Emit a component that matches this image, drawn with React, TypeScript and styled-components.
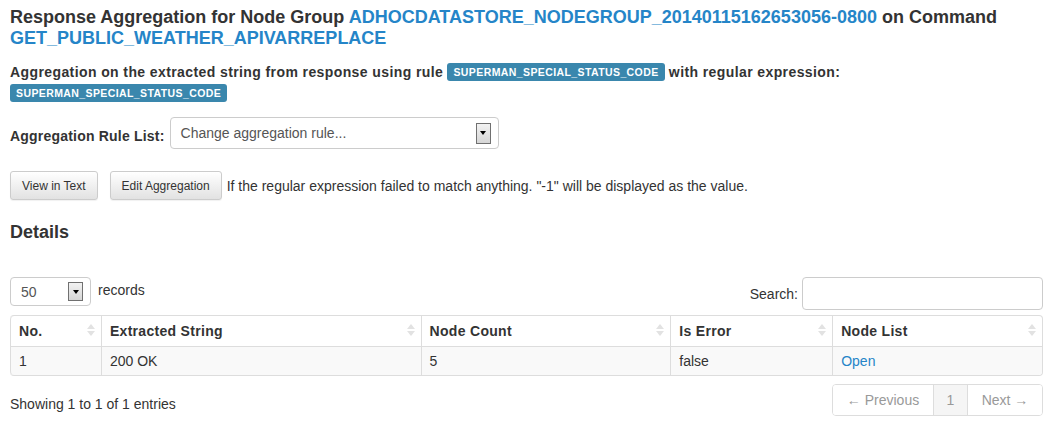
import React from "react";
import styled, { createGlobalStyle } from "styled-components";

const Global = createGlobalStyle`
  html, body { margin: 0; padding: 0; background: #fff; }
  body {
    font-family: "Liberation Sans", Arial, sans-serif;
    font-size: 14px;
    line-height: 20px;
    color: #333;
  }
`;

const Page = styled.div`
  padding: 7px 20px 0 10px;
  display: flex;
  flex-direction: column;
`;

const Title = styled.h4`
  margin: 0;
  font-size: 18px;
  line-height: 21px;
  font-weight: bold;
  color: #333;
`;

const Link = styled.a`
  color: #2585c8;
  text-decoration: none;
`;

const Para = styled.p`
  margin: 13px 0 0;
  font-weight: bold;
  line-height: 21px;
  letter-spacing: 0.4px;
`;

const Label = styled.span`
  display: inline-block;
  background: #3a87ad;
  color: #fff;
  font-size: 10.5px;
  line-height: 14px;
  font-weight: bold;
  letter-spacing: 0.4px;
  padding: 2px 6px 2px;
  border-radius: 3px;
  vertical-align: 1px;
`;

const RuleRow = styled.div`
  display: flex;
  align-items: center;
  gap: 5px;
  margin-top: 13px;
`;

const Bold = styled.span`
  font-weight: bold;
  letter-spacing: 0.2px;
  padding-top: 6px;
`;

const SelectBox = styled.div<{ $w: number; $h: number }>`
  width: ${(p) => p.$w}px;
  height: ${(p) => p.$h}px;
  box-sizing: border-box;
  border: 1px solid #ccc;
  border-radius: 4px;
  display: flex;
  align-items: center;
  padding: 0 7px 0 10px;
  color: #555;
  background: #fff;
`;

const SelectText = styled.span`
  flex: 1;
`;

const Arrow = styled.span<{ $h: number }>`
  width: 15px;
  height: ${(p) => p.$h}px;
  box-sizing: border-box;
  border: 1px solid #707070;
  background: linear-gradient(#f2f2f2, #d6d6d6);
  display: flex;
  align-items: center;
  justify-content: center;
  &::after {
    content: "";
    border-left: 3.5px solid transparent;
    border-right: 3.5px solid transparent;
    border-top: 4px solid #000;
  }
`;

const ButtonRow = styled.div`
  display: flex;
  align-items: center;
  margin-top: 22px;
`;

const Btn = styled.button`
  font-family: "Liberation Sans", Arial, sans-serif;
  font-size: 12px;
  color: #333;
  height: 29px;
  padding: 0 11px;
  border: 1px solid #ccc;
  border-radius: 3px;
  background: linear-gradient(#ffffff, #e2e2e2);
  box-shadow: 0 1px 1px rgba(0,0,0,0.06);
  margin-right: 12px;
  &:last-of-type { margin-right: 5px; }
`;

const Heading = styled.h4`
  margin: 22px 0 0;
  font-size: 18px;
  line-height: 20px;
  font-weight: bold;
`;

const ControlsRow = styled.div`
  display: flex;
  justify-content: space-between;
  align-items: flex-start;
  margin-top: 35px;
`;

const Records = styled.div`
  display: flex;
  align-items: flex-start;
  gap: 7px;
`;

const RecordsText = styled.span`
  padding-top: 3px;
`;

const SearchWrap = styled.div`
  display: flex;
  align-items: center;
  gap: 4px;
`;

const SearchInput = styled.div`
  width: 241px;
  height: 33px;
  box-sizing: border-box;
  border: 1px solid #ccc;
  border-radius: 4px;
`;

const Table = styled.table`
  margin-top: 5px;
  width: 1033px;
  border-collapse: separate;
  border-spacing: 0;
  border: 1px solid #ddd;
  border-left: 0;
  border-radius: 4px;
`;

const Th = styled.th<{ $w: number }>`
  width: ${(p) => p.$w}px;
  text-align: left;
  font-weight: bold;
  letter-spacing: 0.3px;
  padding: 5px 8px 5px;
  line-height: 20px;
  border-left: 1px solid #ddd;
  position: relative;
  &:first-child { border-top-left-radius: 4px; }
`;

const Sort = styled.span`
  position: absolute;
  right: 6px;
  top: 50%;
  margin-top: -7px;
  display: flex;
  flex-direction: column;
  gap: 2px;
  &::before, &::after {
    content: "";
    border-left: 4px solid transparent;
    border-right: 4px solid transparent;
  }
  &::before { border-bottom: 5px solid #e2e2e2; }
  &::after { border-top: 5px solid #e2e2e2; }
`;

const Td = styled.td`
  padding: 4px 8px 4px;
  line-height: 20px;
  background: #f9f9f9;
  border-top: 1px solid #ddd;
  border-left: 1px solid #ddd;
  &:first-child { border-bottom-left-radius: 4px; }
  &:last-child { border-bottom-right-radius: 4px; }
`;

const Footer = styled.div`
  display: flex;
  justify-content: space-between;
  align-items: center;
  margin-top: 8px;
`;

const Info = styled.span`
  padding-top: 8px;
`;

const Pager = styled.div`
  display: flex;
  border: 1px solid #ddd;
  border-radius: 4px;
  overflow: hidden;
  height: 32px;
  box-sizing: border-box;
`;

const PageItem = styled.span<{ $active?: boolean; $w: number }>`
  width: ${(p) => p.$w}px;
  display: flex;
  align-items: center;
  justify-content: center;
  color: #999;
  background: ${(p) => (p.$active ? "#f5f5f5" : "#fff")};
  & + & { border-left: 1px solid #ddd; }
`;

const cols = [
  { name: "No.", w: 74 },
  { name: "Extracted String", w: 303 },
  { name: "Node Count", w: 233 },
  { name: "Is Error", w: 145 },
  { name: "Node List", w: 193 },
];

export default function App() {
  return (
    <>
      <Global />
      <Page>
        <Title>
          Response Aggregation for Node Group{" "}
          <Link>ADHOCDATASTORE_NODEGROUP_20140115162653056-0800</Link> on Command{" "}
          <Link>GET_PUBLIC_WEATHER_APIVARREPLACE</Link>
        </Title>
        <Para>
          Aggregation on the extracted string from response using rule{" "}
          <Label>SUPERMAN_SPECIAL_STATUS_CODE</Label> with regular expression:{" "}
          <Label>SUPERMAN_SPECIAL_STATUS_CODE</Label>
        </Para>
        <RuleRow>
          <Bold>Aggregation Rule List:</Bold>
          <SelectBox $w={329} $h={32}>
            <SelectText>Change aggregation rule...</SelectText>
            <Arrow $h={21} />
          </SelectBox>
        </RuleRow>
        <ButtonRow>
          <Btn>View in Text</Btn>
          <Btn>Edit Aggregation</Btn>
          <span>If the regular expression failed to match anything. "-1" will be displayed as the value.</span>
        </ButtonRow>
        <Heading>Details</Heading>
        <ControlsRow>
          <Records>
            <SelectBox $w={81} $h={29}>
              <SelectText>50</SelectText>
              <Arrow $h={19} />
            </SelectBox>
            <RecordsText>records</RecordsText>
          </Records>
          <SearchWrap>
            <span>Search:</span>
            <SearchInput />
          </SearchWrap>
        </ControlsRow>
        <Table>
          <thead>
            <tr>
              {cols.map((c) => (
                <Th key={c.name} $w={c.w}>
                  {c.name}
                  <Sort />
                </Th>
              ))}
            </tr>
          </thead>
          <tbody>
            <tr>
              <Td>1</Td>
              <Td>200 OK</Td>
              <Td>5</Td>
              <Td>false</Td>
              <Td>
                <Link>Open</Link>
              </Td>
            </tr>
          </tbody>
        </Table>
        <Footer>
          <Info>Showing 1 to 1 of 1 entries</Info>
          <Pager>
            <PageItem $w={100}>← Previous</PageItem>
            <PageItem $w={33} $active>1</PageItem>
            <PageItem $w={74}>Next →</PageItem>
          </Pager>
        </Footer>
      </Page>
    </>
  );
}
